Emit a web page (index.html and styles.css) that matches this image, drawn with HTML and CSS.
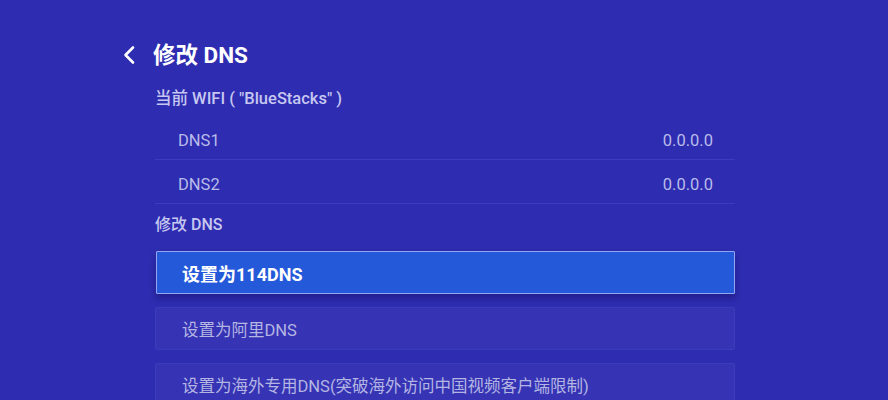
FILE: index.html
```html
<!DOCTYPE html>
<html lang="zh-CN">
<head>
<meta charset="utf-8">
<title>修改 DNS</title>
<link rel="stylesheet" href="styles.css">
</head>
<body>
<div class="page">
  <header class="topbar">
    <svg class="back" width="14" height="20" viewBox="0 0 14 20" aria-hidden="true">
      <polyline points="11,2.5 3.5,10 11,17.5" fill="none" stroke="#ffffff" stroke-width="2.6" stroke-linecap="round" stroke-linejoin="round"/>
    </svg>
    <h1 class="title">修改 DNS</h1>
  </header>

  <section class="content">
    <div class="wifi">当前 WIFI ( "BlueStacks" )</div>

    <ul class="dns-list">
      <li class="dns-row"><span>DNS1</span><span>0.0.0.0</span></li>
      <li class="dns-row"><span>DNS2</span><span>0.0.0.0</span></li>
    </ul>

    <div class="section-label">修改 DNS</div>

    <div class="options">
      <button class="option is-focused">设置为114DNS</button>
      <button class="option">设置为阿里DNS</button>
      <button class="option">设置为海外专用DNS(突破海外访问中国视频客户端限制)</button>
    </div>
  </section>
</div>
</body>
</html>
```

FILE: styles.css
```css
html, body {
  margin: 0;
  padding: 0;
}

body {
  width: 888px;
  height: 400px;
  overflow: hidden;
  background: #2e2cb0;
  font-family: Roboto, "Noto Sans CJK SC", sans-serif;
  color: #c3c4ef;
}

.page {
  padding: 43px 0 0 122px;
}

.topbar {
  display: flex;
  align-items: center;
  gap: 17px;
  height: 24px;
}

.back {
  display: block;
}

.title {
  margin: 0;
  font-size: 22.5px;
  font-weight: 700;
  line-height: 24px;
  color: #ffffff;
}

.content {
  width: 580px;
  margin: 20px 0 0 33px;
}

.wifi {
  font-size: 16.5px;
  font-weight: 500;
  line-height: 24px;
  color: #c6c7f0;
}

.dns-list {
  list-style: none;
  margin: 5px 0 0;
  padding: 0;
}

.dns-row {
  display: flex;
  justify-content: space-between;
  height: 31px;
  padding: 12px 22px 0 23px;
  line-height: 26px;
  font-size: 16.5px;
  color: #b9bbea;
  border-bottom: 1px solid #3d3cc0;
}

.section-label {
  margin-top: 9px;
  font-size: 16px;
  font-weight: 500;
  line-height: 24px;
  color: #c6c7f0;
}

.options {
  display: flex;
  flex-direction: column;
  gap: 13px;
  margin-top: 14px;
}

.option {
  display: block;
  width: 580px;
  height: 43px;
  padding: 0 0 0 26px;
  text-align: left;
  font-family: inherit;
  font-size: 16.5px;
  color: #b4b5e3;
  background: #3634b4;
  border: 1px solid #3c3bba;
  border-radius: 2px;
  box-sizing: border-box;
}

.option.is-focused {
  width: 579px;
  margin-left: 1px;
  padding-left: 25px;
  font-size: 18px;
  font-weight: 700;
  color: #ffffff;
  background: #2459d9;
  border: 1.5px solid #93a5f4;
  border-radius: 1px;
  box-shadow: 0 4px 6px rgba(16, 14, 90, 0.45);
}
```
